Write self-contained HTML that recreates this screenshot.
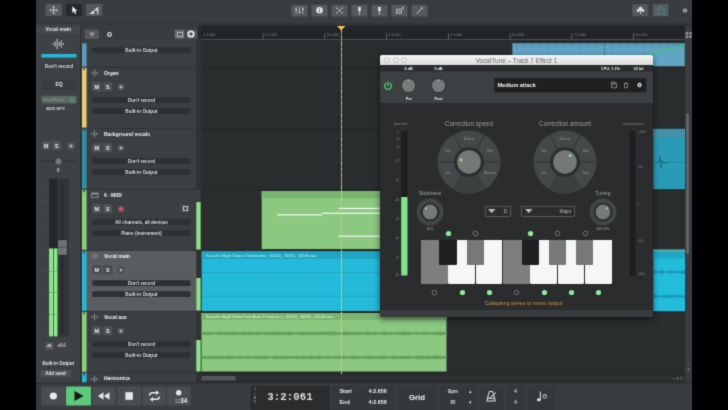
<!DOCTYPE html>
<html><head><meta charset="utf-8"><title>DAW</title>
<style>
html,body{margin:0;padding:0;background:#000;}
body{width:728px;height:410px;overflow:hidden;position:relative;font-family:"Liberation Sans",sans-serif;}
#s{position:absolute;left:0;top:0;width:728px;height:410px;overflow:hidden;background:#000;filter:url(#soft);}
#s div,#s svg{position:absolute;}
#s .t{white-space:nowrap;overflow:visible;}
</style></head><body><svg width="0" height="0" style="position:absolute"><filter id="soft" x="0" y="0" width="100%" height="100%" color-interpolation-filters="sRGB"><feConvolveMatrix order="3" kernelMatrix="0.0192 0.1001 0.0192 0.1001 0.5228 0.1001 0.0192 0.1001 0.0192" edgeMode="duplicate" preserveAlpha="true"/></filter></svg><div id="s">
<svg style="left:198px;top:24px" width="494" height="359"><rect x="0" y="0" width="494" height="359" fill="#2a2d2e"/></svg>
<svg style="left:201px;top:24px" width="484" height="15"><rect x="0" y="0" width="484" height="15" fill="#222527"/></svg>
<svg style="left:201px;top:39px" width="484" height="1"><rect x="0" y="0" width="484" height="1" fill="#4a4d4f"/></svg>
<div class="t" style="left:203.3px;top:32.3px;width:30px;height:6px;line-height:6px;font-size:3.6px;color:#7d8082;font-weight:normal;text-align:left;">1:1:000</div>
<svg style="left:262px;top:33px" width="2" height="7"><rect x="0.7" y="0" width="0.8" height="6.5" fill="#6a6d6f"/></svg>
<div class="t" style="left:265px;top:32.3px;width:30px;height:6px;line-height:6px;font-size:3.6px;color:#7d8082;font-weight:normal;text-align:left;">2:1:000</div>
<svg style="left:324px;top:33px" width="2" height="7"><rect x="0.5" y="0" width="0.8" height="6.5" fill="#6a6d6f"/></svg>
<div class="t" style="left:326.8px;top:32.3px;width:30px;height:6px;line-height:6px;font-size:3.6px;color:#7d8082;font-weight:normal;text-align:left;">3:1:000</div>
<svg style="left:386px;top:33px" width="1" height="7"><rect x="0.2" y="0" width="0.8" height="6.5" fill="#6a6d6f"/></svg>
<div class="t" style="left:388.5px;top:32.3px;width:30px;height:6px;line-height:6px;font-size:3.6px;color:#7d8082;font-weight:normal;text-align:left;">4:1:000</div>
<svg style="left:448px;top:33px" width="1" height="7"><rect x="0" y="0" width="0.8" height="6.5" fill="#6a6d6f"/></svg>
<div class="t" style="left:450.3px;top:32.3px;width:30px;height:6px;line-height:6px;font-size:3.6px;color:#7d8082;font-weight:normal;text-align:left;">5:1:000</div>
<svg style="left:509px;top:33px" width="2" height="7"><rect x="0.7" y="0" width="0.8" height="6.5" fill="#6a6d6f"/></svg>
<div class="t" style="left:512px;top:32.3px;width:30px;height:6px;line-height:6px;font-size:3.6px;color:#7d8082;font-weight:normal;text-align:left;">6:1:000</div>
<svg style="left:571px;top:33px" width="2" height="7"><rect x="0.5" y="0" width="0.8" height="6.5" fill="#6a6d6f"/></svg>
<div class="t" style="left:573.8px;top:32.3px;width:30px;height:6px;line-height:6px;font-size:3.6px;color:#7d8082;font-weight:normal;text-align:left;">7:1:000</div>
<svg style="left:633px;top:33px" width="1" height="7"><rect x="0.2" y="0" width="0.8" height="6.5" fill="#6a6d6f"/></svg>
<div class="t" style="left:635.5px;top:32.3px;width:30px;height:6px;line-height:6px;font-size:3.6px;color:#7d8082;font-weight:normal;text-align:left;">8:1:000</div>
<svg style="left:198px;top:67px" width="487" height="2"><rect x="0" y="0.2" width="487" height="1" fill="#242728"/></svg>
<svg style="left:198px;top:128px" width="487" height="2"><rect x="0" y="0.2" width="487" height="1" fill="#242728"/></svg>
<svg style="left:198px;top:189px" width="487" height="2"><rect x="0" y="0.2" width="487" height="1" fill="#242728"/></svg>
<svg style="left:198px;top:250px" width="487" height="2"><rect x="0" y="0.3" width="487" height="1" fill="#242728"/></svg>
<svg style="left:198px;top:311px" width="487" height="2"><rect x="0" y="0.3" width="487" height="1" fill="#242728"/></svg>
<svg style="left:198px;top:372px" width="487" height="2"><rect x="0" y="0.4" width="487" height="1" fill="#242728"/></svg>
<svg style="left:512px;top:43px" width="173" height="24"><rect x="0.4" y="0.4" width="172.3" height="22.8" fill="#61a5c5"/></svg>
<svg style="left:512px;top:43px" width="173" height="3"><rect x="0.4" y="0.4" width="172.3" height="2.5" fill="#5798b8"/></svg>
<svg style="left:516px;top:46px" width="1" height="4"><rect x="0" y="0" width="0.6" height="4" fill="#3f7f9f"/></svg>
<svg style="left:524px;top:46px" width="1" height="2"><rect x="0" y="0" width="0.6" height="2" fill="#3f7f9f"/></svg>
<svg style="left:532px;top:46px" width="1" height="2"><rect x="0" y="0" width="0.6" height="2" fill="#3f7f9f"/></svg>
<svg style="left:540px;top:46px" width="1" height="2"><rect x="0" y="0" width="0.6" height="2" fill="#3f7f9f"/></svg>
<svg style="left:548px;top:46px" width="1" height="4"><rect x="0" y="0" width="0.6" height="4" fill="#3f7f9f"/></svg>
<svg style="left:556px;top:46px" width="1" height="2"><rect x="0" y="0" width="0.6" height="2" fill="#3f7f9f"/></svg>
<svg style="left:564px;top:46px" width="1" height="2"><rect x="0" y="0" width="0.6" height="2" fill="#3f7f9f"/></svg>
<svg style="left:572px;top:46px" width="1" height="2"><rect x="0" y="0" width="0.6" height="2" fill="#3f7f9f"/></svg>
<svg style="left:580px;top:46px" width="1" height="4"><rect x="0" y="0" width="0.6" height="4" fill="#3f7f9f"/></svg>
<svg style="left:588px;top:46px" width="1" height="2"><rect x="0" y="0" width="0.6" height="2" fill="#3f7f9f"/></svg>
<svg style="left:596px;top:46px" width="1" height="2"><rect x="0" y="0" width="0.6" height="2" fill="#3f7f9f"/></svg>
<svg style="left:604px;top:46px" width="1" height="2"><rect x="0" y="0" width="0.6" height="2" fill="#3f7f9f"/></svg>
<svg style="left:612px;top:46px" width="1" height="4"><rect x="0" y="0" width="0.6" height="4" fill="#3f7f9f"/></svg>
<svg style="left:620px;top:46px" width="1" height="2"><rect x="0" y="0" width="0.6" height="2" fill="#3f7f9f"/></svg>
<svg style="left:628px;top:46px" width="1" height="2"><rect x="0" y="0" width="0.6" height="2" fill="#3f7f9f"/></svg>
<svg style="left:636px;top:46px" width="1" height="2"><rect x="0" y="0" width="0.6" height="2" fill="#3f7f9f"/></svg>
<svg style="left:644px;top:46px" width="1" height="4"><rect x="0" y="0" width="0.6" height="4" fill="#3f7f9f"/></svg>
<svg style="left:652px;top:46px" width="1" height="2"><rect x="0" y="0" width="0.6" height="2" fill="#3f7f9f"/></svg>
<svg style="left:660px;top:46px" width="1" height="2"><rect x="0" y="0" width="0.6" height="2" fill="#3f7f9f"/></svg>
<svg style="left:668px;top:46px" width="1" height="2"><rect x="0" y="0" width="0.6" height="2" fill="#3f7f9f"/></svg>
<svg style="left:676px;top:46px" width="1" height="4"><rect x="0" y="0" width="0.6" height="4" fill="#3f7f9f"/></svg>
<svg style="left:684px;top:46px" width="1" height="2"><rect x="0" y="0" width="0.6" height="2" fill="#3f7f9f"/></svg>
<svg style="left:604px;top:43px" width="1" height="24"><rect x="0" y="0.4" width="0.9" height="23" fill="#3f7893"/></svg>
<svg style="left:640px;top:43px" width="46" height="12" viewBox="0 0 46 12"><path d="M8 13 L30 5.5 L44.6 2.4" stroke="#3fc46a" stroke-width="1.3" fill="none"/></svg>
<svg style="left:653px;top:128px" width="33" height="62"><rect x="0.3" y="0.8" width="31.9" height="60.4" fill="#2a9bb6"/></svg>
<div style="left:653.3px;top:128.8px;width:31.9px;height:7.8px;background:#3f8fa6;background-image:repeating-linear-gradient(90deg,#3a879d 0 1px,#4b9db2 1px 2px)"></div>
<svg style="left:653px;top:162px" width="33" height="1"><rect x="0.3" y="0.2" width="31.9" height="0.7" fill="#1f7f97"/></svg>
<svg style="left:656px;top:152px" width="12" height="20" viewBox="0 0 12 20"><path d="M0 10.5 L3 10.3 L4 4 L5 16 L6 8.5 L7 11 L12 10.6" stroke="#1b6f86" stroke-width="1" fill="none"/></svg>
<svg style="left:261px;top:191px" width="131" height="58"><rect x="0.7" y="0" width="130" height="58" fill="#8bc880"/></svg>
<svg style="left:261px;top:191px" width="131" height="8"><rect x="0.7" y="0" width="130" height="7.5" fill="#7ab570"/></svg>
<svg style="left:338px;top:207px" width="46" height="3"><rect x="0.5" y="0.8" width="45" height="1.3" fill="#eef6ec"/></svg>
<svg style="left:277px;top:214px" width="45" height="2"><rect x="0" y="0.2" width="45" height="1.3" fill="#eef6ec"/></svg>
<svg style="left:322px;top:212px" width="60" height="2"><rect x="0" y="0.6" width="60" height="1.3" fill="#eef6ec"/></svg>
<svg style="left:338px;top:235px" width="46" height="2"><rect x="0.5" y="0.6" width="45" height="1.3" fill="#eef6ec"/></svg>
<svg style="left:201px;top:251px" width="186" height="60"><rect x="0.7" y="0.4" width="185" height="59.6" fill="#24bad9"/></svg>
<svg style="left:201px;top:251px" width="186" height="8"><rect x="0.7" y="0.4" width="185" height="7.6" fill="#1fa6c4"/></svg>
<svg style="left:201px;top:272px" width="186" height="1"><rect x="0.7" y="0" width="185" height="0.7" fill="#1c9cb8"/></svg>
<svg style="left:201px;top:295px" width="186" height="2"><rect x="0.7" y="0.8" width="185" height="0.7" fill="#1c9cb8"/></svg>
<div class="t" style="left:206px;top:252.5px;width:150px;height:6px;line-height:6px;font-size:3.95px;color:#c8eef7;font-weight:normal;text-align:left;">Karaoke Night Chorus Tambourine_ 44100_ 16000_ 44100.wav</div>
<svg style="left:653px;top:249px" width="33" height="63"><rect x="0.3" y="0.6" width="31.9" height="61.6" fill="#22bcdc"/></svg>
<svg style="left:653px;top:249px" width="33" height="3"><rect x="0.3" y="0.6" width="31.9" height="2.2" fill="#5aa79a"/></svg>
<svg style="left:653px;top:251px" width="33" height="8"><rect x="0.3" y="0.8" width="31.9" height="6.7" fill="#1fa8c6"/></svg>
<svg style="left:653.3px;top:249px" width="31.9" height="62" viewBox="0 249 31.9 62"><path d="M0 270.86 L1 271.02 L2 270.46 L3 270.75 L4 271.39 L5 271.11 L6 271.47 L7 271.18 L8 269.92 L9 269.87 L10 270.15 L11 271.56 L12 271.03 L13 271.68 L14 271.53 L15 271.44 L16 270.21 L17 270.72 L18 270.87 L19 271.14 L20 271.22 L21 271.08 L22 270.24 L23 271.44 L24 271.58 L25 271.32 L26 270.86 L27 271.53 L28 271.18 L29 270.62 L30 270.01 L31 270.4 L32 271.54 L32 272.73 L31 273.64 L30 273.95 L29 273.46 L28 273.01 L27 272.74 L26 273.27 L25 272.91 L24 272.7 L23 272.81 L22 273.77 L21 273.1 L20 272.98 L19 273.04 L18 273.26 L17 273.38 L16 273.8 L15 272.81 L14 272.73 L13 272.61 L12 273.13 L11 272.72 L10 273.84 L9 274.06 L8 274.02 L7 273.02 L6 272.79 L5 273.07 L4 272.85 L3 273.36 L2 273.59 L1 273.15 L0 273.27Z M0 295.94 L1 294.24 L2 295.29 L3 294.71 L4 295.46 L5 295.17 L6 295.63 L7 295.86 L8 295.77 L9 295.92 L10 294.59 L11 295.86 L12 295.29 L13 295.17 L14 296 L15 294.65 L16 294.16 L17 295.29 L18 295.34 L19 295.47 L20 295.42 L21 295.84 L22 294.15 L23 295.17 L24 295.21 L25 295.34 L26 295.54 L27 295.29 L28 295.84 L29 295.48 L30 295.46 L31 294.93 L32 295.28 L32 297.48 L31 297.76 L30 297.33 L29 297.31 L28 297.03 L27 297.47 L26 297.26 L25 297.43 L24 297.54 L23 297.57 L22 298.38 L21 297.02 L20 297.36 L19 297.33 L18 297.42 L17 297.46 L16 298.37 L15 297.98 L14 296.9 L13 297.56 L12 297.46 L11 297.02 L10 298.02 L9 296.96 L8 297.08 L7 297.01 L6 297.19 L5 297.56 L4 297.33 L3 297.93 L2 297.46 L1 298.31 L0 296.95Z" fill="#1a93ad"/></svg>
<svg style="left:201px;top:313px" width="246" height="59"><rect x="0.5" y="0" width="245" height="58.5" fill="#8bc880"/></svg>
<svg style="left:201px;top:313px" width="246" height="7"><rect x="0.5" y="0" width="245" height="7" fill="#7ab570"/></svg>
<div class="t" style="left:206px;top:313.5px;width:180px;height:6px;line-height:6px;font-size:3.95px;color:#e4f3e0;font-weight:normal;text-align:left;">Karaoke Night Verse Fuzz Bass F maj var 1_ 44100_ 16000_ 44100.wav</div>
<svg style="left:0;top:0" width="728" height="410" viewBox="0 0 728 410"><path d="M201.5 332.1 L204 331.8 L206.5 332 L209 331.8 L211.5 331.8 L214 332.3 L216.5 332.3 L219 331.6 L221.5 332.1 L224 332.1 L226.5 331.4 L229 331.9 L231.5 331.6 L234 331.9 L236.5 331.7 L239 332.2 L241.5 331.7 L244 331.5 L246.5 331.9 L249 331.6 L251.5 331.7 L254 332.3 L256.5 331.6 L259 331.8 L261.5 332.1 L264 332.3 L266.5 331.5 L269 331.9 L271.5 331.7 L274 331.5 L276.5 331.7 L279 331.5 L281.5 332 L284 331.6 L286.5 331.9 L289 331.5 L291.5 331.5 L294 332.3 L296.5 332.2 L299 332.1 L301.5 331.4 L304 331.9 L306.5 331.8 L309 332.1 L311.5 331.9 L314 332 L316.5 332 L319 331.8 L321.5 331.8 L324 331.5 L326.5 331.7 L329 331.5 L331.5 331.5 L334 331.4 L336.5 331.7 L339 332.2 L341.5 331.5 L344 331.4 L346.5 331.5 L349 331.8 L351.5 331.7 L354 332.1 L356.5 331.6 L359 331.8 L361.5 332.1 L364 332.3 L366.5 331.5 L369 331.4 L371.5 332.3 L374 331.6 L376.5 332 L379 332.2 L381.5 332.1 L384 331.6 L386.5 331.5 L389 332.3 L391.5 331.8 L394 332.3 L396.5 331.7 L399 332 L401.5 331.5 L404 331.4 L406.5 331.9 L409 331.4 L411.5 332.1 L414 332.3 L416.5 331.8 L419 332.3 L421.5 332.2 L424 332 L426.5 331.8 L429 332.2 L431.5 332.3 L434 331.5 L436.5 332 L439 331.4 L441.5 331.5 L444 332 L446.5 331.9 L446.5 334.9 L444 334.9 L441.5 335.3 L439 335.4 L436.5 334.8 L434 335.3 L431.5 334.6 L429 334.7 L426.5 335.1 L424 334.9 L421.5 334.7 L419 334.6 L416.5 335 L414 334.6 L411.5 334.8 L409 335.4 L406.5 335 L404 335.4 L401.5 335.3 L399 334.8 L396.5 335.2 L394 334.6 L391.5 335.1 L389 334.6 L386.5 335.3 L384 335.2 L381.5 334.8 L379 334.7 L376.5 334.9 L374 335.2 L371.5 334.6 L369 335.4 L366.5 335.3 L364 334.6 L361.5 334.8 L359 335 L356.5 335.2 L354 334.7 L351.5 335.1 L349 335 L346.5 335.3 L344 335.4 L341.5 335.3 L339 334.7 L336.5 335.1 L334 335.4 L331.5 335.3 L329 335.3 L326.5 335.1 L324 335.3 L321.5 335 L319 335 L316.5 334.8 L314 334.9 L311.5 335 L309 334.8 L306.5 335.1 L304 334.9 L301.5 335.4 L299 334.7 L296.5 334.7 L294 334.6 L291.5 335.3 L289 335.3 L286.5 334.9 L284 335.2 L281.5 334.9 L279 335.3 L276.5 335.1 L274 335.3 L271.5 335.2 L269 334.9 L266.5 335.3 L264 334.6 L261.5 334.8 L259 335 L256.5 335.2 L254 334.6 L251.5 335.1 L249 335.2 L246.5 335 L244 335.3 L241.5 335.1 L239 334.7 L236.5 335.1 L234 334.9 L231.5 335.3 L229 334.9 L226.5 335.4 L224 334.7 L221.5 334.8 L219 335.3 L216.5 334.6 L214 334.6 L211.5 335.1 L209 335.1 L206.5 334.9 L204 335 L201.5 334.7Z" fill="#66a25e"/><path d="M201.5 355.9 L204 355.7 L206.5 355.8 L209 355.8 L211.5 355.8 L214 355.5 L216.5 355.9 L219 355.9 L221.5 355.7 L224 356.1 L226.5 356.1 L229 355.4 L231.5 355.9 L234 355.8 L236.5 356.3 L239 356 L241.5 355.8 L244 356.3 L246.5 355.8 L249 355.7 L251.5 356.3 L254 355.8 L256.5 355.9 L259 355.7 L261.5 356 L264 355.7 L266.5 355.6 L269 356.3 L271.5 356.3 L274 355.7 L276.5 355.4 L279 356.1 L281.5 355.9 L284 355.8 L286.5 356 L289 356 L291.5 356 L294 356 L296.5 355.8 L299 356.1 L301.5 356 L304 355.6 L306.5 356.3 L309 355.8 L311.5 355.7 L314 356.1 L316.5 356.1 L319 355.6 L321.5 356.1 L324 356.2 L326.5 355.9 L329 355.7 L331.5 356.2 L334 356 L336.5 356 L339 355.6 L341.5 355.9 L344 355.5 L346.5 356.2 L349 356 L351.5 355.7 L354 355.5 L356.5 355.9 L359 356.1 L361.5 356.2 L364 355.8 L366.5 356.2 L369 355.6 L371.5 355.6 L374 356.2 L376.5 356.1 L379 355.6 L381.5 355.7 L384 355.6 L386.5 356 L389 356.2 L391.5 356.1 L394 355.6 L396.5 356.1 L399 356 L401.5 356 L404 355.9 L406.5 356 L409 355.5 L411.5 356.2 L414 356.3 L416.5 355.5 L419 355.5 L421.5 355.4 L424 355.9 L426.5 355.4 L429 355.5 L431.5 356.1 L434 355.6 L436.5 355.6 L439 355.7 L441.5 355.9 L444 356.1 L446.5 356 L446.5 358.8 L444 358.8 L441.5 359 L439 359.1 L436.5 359.3 L434 359.2 L431.5 358.7 L429 359.3 L426.5 359.3 L424 358.9 L421.5 359.4 L419 359.3 L416.5 359.3 L414 358.5 L411.5 358.7 L409 359.3 L406.5 358.9 L404 358.9 L401.5 358.9 L399 358.8 L396.5 358.8 L394 359.2 L391.5 358.8 L389 358.6 L386.5 358.8 L384 359.2 L381.5 359.1 L379 359.2 L376.5 358.8 L374 358.7 L371.5 359.3 L369 359.2 L366.5 358.7 L364 359 L361.5 358.6 L359 358.7 L356.5 358.9 L354 359.3 L351.5 359.1 L349 358.8 L346.5 358.7 L344 359.3 L341.5 358.9 L339 359.2 L336.5 358.8 L334 358.8 L331.5 358.6 L329 359.1 L326.5 358.9 L324 358.7 L321.5 358.7 L319 359.2 L316.5 358.7 L314 358.8 L311.5 359.2 L309 359 L306.5 358.6 L304 359.2 L301.5 358.9 L299 358.8 L296.5 359 L294 358.9 L291.5 358.8 L289 358.8 L286.5 358.8 L284 359 L281.5 358.9 L279 358.8 L276.5 359.4 L274 359.1 L271.5 358.6 L269 358.6 L266.5 359.2 L264 359.1 L261.5 358.8 L259 359.1 L256.5 358.9 L254 359.1 L251.5 358.6 L249 359.1 L246.5 359.1 L244 358.6 L241.5 359 L239 358.9 L236.5 358.5 L234 359 L231.5 359 L229 359.4 L226.5 358.8 L224 358.7 L221.5 359.2 L219 358.9 L216.5 359 L214 359.3 L211.5 359.1 L209 359 L206.5 359 L204 359.1 L201.5 359Z" fill="#66a25e"/></svg>
<svg style="left:201px;top:376px" width="484" height="5"><rect x="0.5" y="0" width="483" height="4.5" fill="#2c2f30"/></svg>
<svg style="left:201px;top:376px" width="35" height="5"><rect x="0.5" y="0" width="34" height="4.5" rx="1" fill="#55585a"/></svg>
<svg style="left:685px;top:24px" width="7" height="359"><rect x="0" y="0" width="7" height="359" fill="#3a3d3f"/></svg>
<svg style="left:686px;top:113px" width="3" height="141"><rect x="0.2" y="0" width="2.6" height="141" rx="1.3" fill="#66696b"/></svg>
<svg style="left:685px;top:24px" width="7" height="15"><rect x="0" y="0" width="7" height="15" fill="#3a3d3f"/></svg>
<svg style="left:685px;top:32px" width="7" height="6"><rect x="0.6" y="0" width="6" height="6" fill="#8d9092"/></svg>
<svg style="left:688px;top:32px" width="2" height="6"><rect x="0.2" y="0" width="0.9" height="6" fill="#3a3d3f"/></svg>
<svg style="left:685px;top:34px" width="7" height="2"><rect x="0.6" y="0.6" width="6" height="0.9" fill="#3a3d3f"/></svg>
<div class="t" style="left:670px;top:374px;width:16px;height:8px;line-height:8px;font-size:5px;color:#8a8d8f;font-weight:bold;text-align:center;">- + &#8759;</div>
<div class="t" style="left:685px;top:360px;width:7px;height:6px;line-height:6px;font-size:5px;color:#8a8d8f;font-weight:bold;text-align:center;">-</div>
<div class="t" style="left:685px;top:366px;width:7px;height:6px;line-height:6px;font-size:5px;color:#8a8d8f;font-weight:bold;text-align:center;">+</div>
<div style="left:341px;top:29px;width:1px;height:344.5px;background:repeating-linear-gradient(#d8c674 0 1.6px,rgba(216,198,116,0.45) 1.6px 2.4px);width:0.9px"></div>
<svg style="left:337.4px;top:25.6px" width="8.4" height="4.4" viewBox="0 0 8.4 4.4"><path d="M0 0 H8.4 L4.2 4.4Z" fill="#f0c85a"/></svg>
<svg style="left:36px;top:0px" width="656" height="24"><rect x="0" y="0" width="656" height="24" fill="#3a3d3f"/></svg>
<svg style="left:45px;top:4px" width="17" height="12"><rect x="0.5" y="0" width="16.3" height="12" rx="1" fill="#56595b"/></svg>
<svg style="left:66px;top:4px" width="16" height="12"><rect x="0" y="0" width="16" height="12" rx="1" fill="#27292b"/></svg>
<svg style="left:86px;top:4px" width="17" height="12"><rect x="0" y="0" width="16.3" height="12" rx="1" fill="#56595b"/></svg>
<svg style="left:291px;top:4px" width="17" height="13"><rect x="0.5" y="0.8" width="16" height="11.8" rx="1" fill="#56595b"/></svg>
<svg style="left:311px;top:4px" width="17" height="13"><rect x="0.5" y="0.8" width="16" height="11.8" rx="1" fill="#56595b"/></svg>
<svg style="left:331px;top:4px" width="17" height="13"><rect x="0.5" y="0.8" width="16" height="11.8" rx="1" fill="#56595b"/></svg>
<svg style="left:351px;top:4px" width="17" height="13"><rect x="0.5" y="0.8" width="16" height="11.8" rx="1" fill="#56595b"/></svg>
<svg style="left:371px;top:4px" width="17" height="13"><rect x="0.5" y="0.8" width="16" height="11.8" rx="1" fill="#56595b"/></svg>
<svg style="left:391px;top:4px" width="17" height="13"><rect x="0.5" y="0.8" width="16" height="11.8" rx="1" fill="#56595b"/></svg>
<svg style="left:411px;top:4px" width="17" height="13"><rect x="0.5" y="0.8" width="16" height="11.8" rx="1" fill="#56595b"/></svg>
<svg style="left:632px;top:4px" width="17" height="13"><rect x="0.3" y="0.3" width="16" height="12" rx="1" fill="#56595b"/></svg>
<svg style="left:653px;top:4px" width="16" height="13"><rect x="0" y="0.3" width="15.5" height="12" rx="1" fill="#535e61"/></svg>
<svg style="left:0;top:0" width="728" height="24" viewBox="0 0 728 24">
<g stroke="#dcdedf" stroke-width="0.8" fill="none">
<path d="M53.7 6.4 V14 M49.9 10.2 H57.5 M52.6 7.5 L53.7 6.4 L54.8 7.5 M52.6 12.9 L53.7 14 L54.8 12.9 M51 9.1 L49.9 10.2 L51 11.3 M56.4 9.1 L57.5 10.2 L56.4 11.3"/>
</g>
<path d="M72.3 6.2 L72.3 13 L74 11.5 L75.2 14.3 L76.3 13.8 L75.1 11.1 L77.3 11Z" fill="#f2f3f4"/>
<path d="M89.3 14 L98.3 6.8 L98.3 14Z" fill="#dcdedf"/>
<path d="M94.3 10.6 h2.8 v3.4 h-2.8z" fill="#56595b"/>
<g stroke="#d2d4d5" stroke-width="0.7" fill="none">
<path d="M296.2 7 V14 M299.5 7 V14 M302.8 7 V14"/>
</g>
<g fill="#d2d4d5"><rect x="295.4" y="9" width="1.6" height="1.4"/><rect x="298.7" y="11.2" width="1.6" height="1.4"/><rect x="302" y="8.4" width="1.6" height="1.4"/></g>
<circle cx="319.5" cy="10.3" r="3.3" fill="#e2e4e5"/>
<rect x="319.05" y="9.8" width="0.9" height="2.5" fill="#56595b"/><rect x="319.05" y="8.2" width="0.9" height="0.9" fill="#56595b"/>
<g fill="#d2d4d5"><circle cx="337" cy="8.2" r="0.8"/><circle cx="342" cy="8.2" r="0.8"/><circle cx="337" cy="12.8" r="0.8"/><circle cx="342" cy="12.8" r="0.8"/><circle cx="339.5" cy="10.5" r="1.1"/></g>
<g fill="#d8dadb"><rect x="358" y="7" width="2.8" height="4.2"/><rect x="359" y="11.2" width="0.7" height="2"/><circle cx="359.4" cy="14" r="0.7"/>
<rect x="378" y="7" width="2.8" height="4.2"/><rect x="379" y="11.2" width="0.7" height="2"/><rect x="378.3" y="13.5" width="2.2" height="0.7"/></g>
<g stroke="#d2d4d5" stroke-width="0.8" fill="none"><path d="M396.5 9.2 h5 v4 h-5z M397.7 11 h2.6 M403 7 v2 M402 8 h2"/></g>
<path d="M416.5 14 L422.5 7.5 M421 7.3 L422.7 9" stroke="#d2d4d5" stroke-width="0.9" fill="none"/>
<g fill="#dcdedf"><circle cx="640.5" cy="8.8" r="2"/><circle cx="638.2" cy="10.6" r="1.5"/><circle cx="642.8" cy="10.6" r="1.5"/><rect x="640.1" y="9" width="0.8" height="5"/></g>
<g stroke="#64898f" stroke-width="0.8" fill="none"><path d="M658.8 8.2 h-1 v6 h6.4 v-6 h-1 M661 6 v5.5 M659.9 7.1 L661 6 L662.1 7.1"/></g>
<circle cx="685" cy="10.5" r="1.5" fill="none" stroke="#c9cbcc" stroke-width="1.2"/>
</svg>
<div style="left:36px;top:22px;width:656px;height:4.3px;background:linear-gradient(#383b3d,#2c2e30);"></div>
<svg style="left:36px;top:24px" width="45" height="359"><rect x="0" y="0" width="44.5" height="359" fill="#3f4244"/></svg>
<svg style="left:36px;top:26px" width="45" height="8"><rect x="0" y="0.5" width="44.5" height="7" fill="#45484a"/></svg>
<div class="t" style="left:36px;top:26px;width:44.5px;height:8px;line-height:8px;font-size:4.9px;color:#e4e6e7;font-weight:bold;text-align:center;">Vocal main</div>
<svg style="left:51px;top:37.5px" width="14" height="12" viewBox="0 0 14 12"><g stroke="#cfd1d2" stroke-width="1"><path d="M1.8 5.3 V6.7 M4 3.5 V8.5 M6.1 0.8 V11.2 M8.2 4 V8 M10.2 2.3 V9.7 M12.3 5 V7"/></g></svg>
<svg style="left:41px;top:54px" width="36" height="4"><rect x="0.5" y="0" width="35" height="3.6" fill="#24b6d6"/></svg>
<svg style="left:41px;top:62px" width="36" height="8"><rect x="0.5" y="0.7" width="35" height="6.8" fill="#3b3e40"/></svg>
<div class="t" style="left:41.5px;top:63.5px;width:35px;height:6.6px;line-height:6.6px;font-size:4.8px;color:#dcdedf;font-weight:bold;text-align:center;">Don't record</div>
<svg style="left:41px;top:79px" width="36" height="11"><rect x="0.5" y="0.5" width="35" height="10.3" fill="#3a3d3f"/></svg>
<div class="t" style="left:41.5px;top:80.3px;width:35px;height:9.7px;line-height:9.7px;font-size:5px;color:#e4e6e7;font-weight:bold;text-align:center;">EQ</div>
<svg style="left:41px;top:95px" width="36" height="9"><rect x="0.5" y="0.8" width="35" height="7.8" rx="1" fill="#5a685f"/></svg>
<div class="t" style="left:43px;top:96px;width:24px;height:7.8px;line-height:7.8px;font-size:4.3px;color:#80968a;font-weight:bold;text-align:left;">VocalTune</div>
<svg style="left:69.3px;top:96.8px" width="6" height="6" viewBox="0 0 6 6"><path d="M3 0.6 V2.8 M1.7 1.5 A2 2 0 1 0 4.3 1.5" stroke="#52c777" stroke-width="0.8" fill="none"/></svg>
<div class="t" style="left:33.2px;top:105px;width:44.5px;height:7px;line-height:7px;font-size:4.3px;color:#d4d6d7;font-weight:bold;text-align:center;">ADD EFX</div>
<svg style="left:42px;top:141px" width="9" height="9"><rect x="0" y="0.6" width="8.4" height="8" rx="1" fill="#55585a"/></svg>
<svg style="left:52px;top:141px" width="9" height="9"><rect x="0.3" y="0.6" width="8.7" height="8" rx="1" fill="#55585a"/></svg>
<div class="t" style="left:42px;top:142.3px;width:8.4px;height:8px;line-height:8px;font-size:5.2px;color:#eceeef;font-weight:bold;text-align:center;">M</div>
<div class="t" style="left:52.3px;top:142.3px;width:8.7px;height:8px;line-height:8px;font-size:5.2px;color:#eceeef;font-weight:bold;text-align:center;">S</div>
<svg style="left:66.8px;top:141.8px" width="8" height="8" viewBox="0 0 8 8"><circle cx="4" cy="4" r="3.7" fill="#55585a"/><circle cx="4" cy="4" r="1.5" fill="#aeb0b1"/></svg>
<svg style="left:40px;top:160px" width="37" height="2"><rect x="0.5" y="0.7" width="36.5" height="0.8" fill="#2a2c2e"/></svg>
<svg style="left:55px;top:157.5px" width="7" height="7" viewBox="0 0 7 7"><circle cx="3.5" cy="3.5" r="3" fill="#76797b"/></svg>
<div class="t" style="left:36px;top:167px;width:44.5px;height:7px;line-height:7px;font-size:4.5px;color:#d4d6d7;font-weight:bold;text-align:center;">0</div>
<svg style="left:49px;top:178px" width="20" height="159"><rect x="0.1" y="0.6" width="19.5" height="157.8" fill="#323537"/></svg>
<svg style="left:49px;top:178px" width="9" height="159"><rect x="0.1" y="0.6" width="8" height="157.8" fill="#252729"/></svg>
<svg style="left:49px;top:248px" width="5" height="89"><rect x="0.1" y="0.4" width="4.1" height="88" fill="#8ce88c"/></svg>
<svg style="left:53px;top:248px" width="5" height="89"><rect x="0.8" y="0.4" width="3.7" height="88" fill="#8ce88c"/></svg>
<svg style="left:49px;top:271px" width="9" height="1"><rect x="0.3" y="0" width="8" height="0.7" fill="#5aa85a"/></svg>
<svg style="left:49px;top:292px" width="9" height="1"><rect x="0.3" y="0" width="8" height="0.7" fill="#5aa85a"/></svg>
<svg style="left:49px;top:314px" width="9" height="1"><rect x="0.3" y="0" width="8" height="0.7" fill="#5aa85a"/></svg>
<svg style="left:61px;top:185px" width="2" height="148"><rect x="0.7" y="0" width="1.1" height="148" fill="#1d1f20"/></svg>
<div style="left:57.8px;top:239.5px;width:9px;height:15.5px;background:#6f7274;border-radius:1px;box-shadow:0 0 1px #000"></div>
<svg style="left:57px;top:246px" width="10" height="2"><rect x="0.8" y="0.8" width="9" height="0.8" fill="#45484a"/></svg>
<svg style="left:43px;top:187px" width="3" height="1"><rect x="0.5" y="0" width="2.5" height="0.8" fill="#5a5d5f"/></svg>
<svg style="left:43px;top:200px" width="3" height="1"><rect x="0.5" y="0" width="2.5" height="0.8" fill="#5a5d5f"/></svg>
<svg style="left:43px;top:213px" width="3" height="1"><rect x="0.5" y="0" width="2.5" height="0.8" fill="#5a5d5f"/></svg>
<svg style="left:43px;top:229px" width="3" height="1"><rect x="0.5" y="0" width="2.5" height="0.8" fill="#5a5d5f"/></svg>
<svg style="left:43px;top:250px" width="3" height="1"><rect x="0.5" y="0" width="2.5" height="0.8" fill="#5a5d5f"/></svg>
<svg style="left:43px;top:271px" width="3" height="1"><rect x="0.5" y="0" width="2.5" height="0.8" fill="#5a5d5f"/></svg>
<svg style="left:43px;top:292px" width="3" height="1"><rect x="0.5" y="0" width="2.5" height="0.8" fill="#5a5d5f"/></svg>
<svg style="left:43px;top:314px" width="3" height="1"><rect x="0.5" y="0" width="2.5" height="0.8" fill="#5a5d5f"/></svg>
<svg style="left:43px;top:334px" width="3" height="1"><rect x="0.5" y="0" width="2.5" height="0.8" fill="#5a5d5f"/></svg>
<svg style="left:45px;top:342px" width="9" height="8"><rect x="0.4" y="0.4" width="7.8" height="7.4" rx="1" fill="#55585a"/></svg>
<div class="t" style="left:45.4px;top:342.8px;width:7.8px;height:7.4px;line-height:7.4px;font-size:3.4px;color:#d4d6d7;font-weight:bold;text-align:center;">dB</div>
<div class="t" style="left:56.9px;top:342.8px;width:14px;height:6.5px;line-height:6.5px;font-size:4.5px;color:#d4d6d7;font-weight:bold;text-align:left;">+0.0</div>
<div class="t" style="left:36px;top:359.5px;width:44.5px;height:7px;line-height:7px;font-size:4.5px;color:#e4e6e7;font-weight:bold;text-align:center;">Built-in Output</div>
<svg style="left:40px;top:370px" width="31" height="7"><rect x="0.4" y="0.2" width="30.4" height="6.8" rx="1" fill="#4f5254"/></svg>
<div class="t" style="left:40.4px;top:370.6px;width:30.4px;height:6.8px;line-height:6.8px;font-size:4.5px;color:#e4e6e7;font-weight:bold;text-align:center;">Add send</div>
<svg style="left:80px;top:24px" width="118" height="359"><rect x="0.5" y="0" width="117.5" height="359" fill="#3c3f41"/></svg>
<svg style="left:80px;top:24px" width="2" height="359"><rect x="0.5" y="0" width="0.8" height="359" fill="#2c2e30"/></svg>
<svg style="left:82px;top:24px" width="116" height="16"><rect x="0" y="0" width="116" height="16" fill="#393c3e"/></svg>
<svg style="left:84px;top:29px" width="15" height="10"><rect x="0.6" y="0.5" width="14.4" height="9.5" rx="1" fill="#55585a"/></svg>
<svg style="left:88.8px;top:31.5px" width="6" height="6" viewBox="0 0 6 6"><path d="M0.5 1 H5.5 M1.3 2.5 H4.7 M2.2 4 H3.8" stroke="#c4c6c7" stroke-width="0.8"/></svg>
<svg style="left:106.1px;top:30.8px" width="7" height="7" viewBox="0 0 7 7"><circle cx="3.5" cy="3.5" r="1.8" fill="none" stroke="#d8dadb" stroke-width="1.3"/></svg>
<svg style="left:174px;top:29px" width="11" height="10"><rect x="0.6" y="0.8" width="10" height="9.2" rx="1" fill="#66696b"/></svg>
<div style="left:176.6px;top:32px;width:6px;height:4.5px;background:#5a5d5f;border:0.7px solid #b4b6b7;border-top-width:1.5px;box-sizing:border-box"></div>
<svg style="left:186px;top:29px" width="11" height="10"><rect x="0" y="0.8" width="11" height="9.2" rx="1" fill="#55585a"/></svg>
<svg style="left:187.4px;top:30.3px" width="8" height="8" viewBox="0 0 8 8"><circle cx="4" cy="4" r="3.6" fill="#eceeef"/><path d="M4 1.9 V6.1 M1.9 4 H6.1" stroke="#2a2c2e" stroke-width="1.1"/></svg>
<svg style="left:82px;top:43px" width="5" height="24"><rect x="0" y="0.3" width="4.6" height="23.43" fill="#5a9cc0"/></svg>
<svg style="left:92px;top:47px" width="99" height="6"><rect x="0.3" y="0.2" width="98.3" height="5.8" rx="1" fill="#2e3032"/></svg>
<div class="t" style="left:92.3px;top:47.900000000000006px;width:98.3px;height:5.8px;line-height:5.8px;font-size:4.6px;color:#dcdedf;font-weight:bold;text-align:center;">Built-in Output</div>
<svg style="left:82px;top:67px" width="5" height="61"><rect x="0" y="0.5" width="4.6" height="60.23" fill="#e6cc78"/></svg>
<svg style="left:82px;top:66px" width="114" height="2"><rect x="0" y="0.8" width="114" height="0.9" fill="#313335"/></svg>
<svg style="left:83px;top:68px" width="2" height="2"><rect x="0.3" y="0.4" width="1.6" height="1.6" fill="#2a2c2e"/></svg>
<svg style="left:90px;top:69.3px" width="10" height="8" viewBox="0 0 10 8"><g stroke="#8f9294" stroke-width="0.9"><path d="M1.2 3.5 V4.5 M2.9 2.6 V5.4 M4.6 0.6 V7.4 M6.3 2.6 V5.4 M8 3.5 V4.5"/></g></svg>
<div class="t" style="left:103.9px;top:68.8px;width:90px;height:8px;line-height:8px;font-size:5px;color:#f2f3f4;font-weight:bold;text-align:left;">Organ</div>
<svg style="left:92px;top:82px" width="10" height="10"><rect x="0.3" y="0.2" width="9" height="9" rx="1" fill="#505355"/></svg>
<svg style="left:103px;top:82px" width="10" height="10"><rect x="0.2" y="0.2" width="9" height="9" rx="1" fill="#505355"/></svg>
<div class="t" style="left:92.3px;top:83px;width:9px;height:8.7px;line-height:8.7px;font-size:5.4px;color:#eceeef;font-weight:bold;text-align:center;">M</div>
<div class="t" style="left:103.2px;top:83px;width:9px;height:8.7px;line-height:8.7px;font-size:5.4px;color:#eceeef;font-weight:bold;text-align:center;">S</div>
<svg style="left:116.8px;top:83px" width="8" height="8" viewBox="0 0 8 8"><circle cx="4" cy="4" r="3.6" fill="#505355"/><circle cx="4" cy="4" r="1.5" fill="#aeb0b1"/></svg>
<svg style="left:92px;top:97px" width="99" height="6"><rect x="0.3" y="0.2" width="98.3" height="5.8" rx="1" fill="#2e3032"/></svg>
<div class="t" style="left:92.3px;top:97.9px;width:98.3px;height:5.8px;line-height:5.8px;font-size:4.6px;color:#dcdedf;font-weight:bold;text-align:center;">Don't record</div>
<svg style="left:92px;top:108px" width="99" height="6"><rect x="0.3" y="0.2" width="98.3" height="5.8" rx="1" fill="#2e3032"/></svg>
<div class="t" style="left:92.3px;top:108.9px;width:98.3px;height:5.8px;line-height:5.8px;font-size:4.6px;color:#dcdedf;font-weight:bold;text-align:center;">Built-in Output</div>
<svg style="left:82px;top:128px" width="5" height="61"><rect x="0" y="0.53" width="4.6" height="60.23" fill="#2f8ea8"/></svg>
<svg style="left:82px;top:127px" width="114" height="2"><rect x="0" y="0.83" width="114" height="0.9" fill="#313335"/></svg>
<svg style="left:83px;top:129px" width="2" height="3"><rect x="0.3" y="0.43" width="1.6" height="1.6" fill="#2a2c2e"/></svg>
<svg style="left:90px;top:130.3px" width="10" height="8" viewBox="0 0 10 8"><g stroke="#8f9294" stroke-width="0.9"><path d="M1.2 3.5 V4.5 M2.9 2.6 V5.4 M4.6 0.6 V7.4 M6.3 2.6 V5.4 M8 3.5 V4.5"/></g></svg>
<div class="t" style="left:103.9px;top:129.82999999999998px;width:90px;height:8px;line-height:8px;font-size:5px;color:#f2f3f4;font-weight:bold;text-align:left;">Background vocals</div>
<svg style="left:92px;top:143px" width="10" height="10"><rect x="0.3" y="0.23" width="9" height="9" rx="1" fill="#505355"/></svg>
<svg style="left:103px;top:143px" width="10" height="10"><rect x="0.2" y="0.23" width="9" height="9" rx="1" fill="#505355"/></svg>
<div class="t" style="left:92.3px;top:144.03px;width:9px;height:8.7px;line-height:8.7px;font-size:5.4px;color:#eceeef;font-weight:bold;text-align:center;">M</div>
<div class="t" style="left:103.2px;top:144.03px;width:9px;height:8.7px;line-height:8.7px;font-size:5.4px;color:#eceeef;font-weight:bold;text-align:center;">S</div>
<svg style="left:116.8px;top:144px" width="8" height="8" viewBox="0 0 8 8"><circle cx="4" cy="4" r="3.6" fill="#505355"/><circle cx="4" cy="4" r="1.5" fill="#aeb0b1"/></svg>
<svg style="left:92px;top:158px" width="99" height="7"><rect x="0.3" y="0.23" width="98.3" height="5.8" rx="1" fill="#2e3032"/></svg>
<div class="t" style="left:92.3px;top:158.92999999999998px;width:98.3px;height:5.8px;line-height:5.8px;font-size:4.6px;color:#dcdedf;font-weight:bold;text-align:center;">Don't record</div>
<svg style="left:92px;top:169px" width="99" height="7"><rect x="0.3" y="0.23" width="98.3" height="5.8" rx="1" fill="#2e3032"/></svg>
<div class="t" style="left:92.3px;top:169.93px;width:98.3px;height:5.8px;line-height:5.8px;font-size:4.6px;color:#dcdedf;font-weight:bold;text-align:center;">Built-in Output</div>
<svg style="left:82px;top:189px" width="5" height="61"><rect x="0" y="0.56" width="4.6" height="60.23" fill="#8ad07e"/></svg>
<svg style="left:82px;top:188px" width="114" height="2"><rect x="0" y="0.86" width="114" height="0.9" fill="#313335"/></svg>
<svg style="left:83px;top:190px" width="2" height="3"><rect x="0.3" y="0.46" width="1.6" height="1.6" fill="#2a2c2e"/></svg>
<svg style="left:91px;top:192px" width="8" height="7"><rect x="0" y="0.56" width="7.5" height="5.5" rx="0.8" fill="#8f9294"/></svg>
<svg style="left:92px;top:194px" width="6" height="4"><rect x="0" y="0.56" width="5.5" height="2.5" fill="#3c3f41"/></svg>
<div class="t" style="left:103.9px;top:190.85999999999999px;width:90px;height:8px;line-height:8px;font-size:5px;color:#f2f3f4;font-weight:bold;text-align:left;">6 - MIDI</div>
<svg style="left:92px;top:204px" width="10" height="10"><rect x="0.3" y="0.26" width="9" height="9" rx="1" fill="#505355"/></svg>
<svg style="left:103px;top:204px" width="10" height="10"><rect x="0.2" y="0.26" width="9" height="9" rx="1" fill="#505355"/></svg>
<div class="t" style="left:92.3px;top:205.06px;width:9px;height:8.7px;line-height:8.7px;font-size:5.4px;color:#eceeef;font-weight:bold;text-align:center;">M</div>
<div class="t" style="left:103.2px;top:205.06px;width:9px;height:8.7px;line-height:8.7px;font-size:5.4px;color:#eceeef;font-weight:bold;text-align:center;">S</div>
<svg style="left:116.8px;top:205.1px" width="8" height="8" viewBox="0 0 8 8"><circle cx="4" cy="4" r="3.6" fill="#505355"/><circle cx="4" cy="4" r="2.1" fill="#e0506a"/></svg>
<svg style="left:92px;top:219px" width="99" height="7"><rect x="0.3" y="0.26" width="98.3" height="5.8" rx="1" fill="#2e3032"/></svg>
<div class="t" style="left:92.3px;top:219.95999999999998px;width:98.3px;height:5.8px;line-height:5.8px;font-size:4.6px;color:#dcdedf;font-weight:bold;text-align:center;">All channels, all devices</div>
<svg style="left:92px;top:230px" width="99" height="7"><rect x="0.3" y="0.26" width="98.3" height="5.8" rx="1" fill="#2e3032"/></svg>
<div class="t" style="left:92.3px;top:230.95999999999998px;width:98.3px;height:5.8px;line-height:5.8px;font-size:4.6px;color:#dcdedf;font-weight:bold;text-align:center;">Piano (Instrument)</div>
<svg style="left:86px;top:250px" width="110" height="62"><rect x="0.5" y="0.3" width="109.5" height="61.03" fill="#5a5d5f"/></svg>
<svg style="left:82px;top:250px" width="5" height="61"><rect x="0" y="0.6" width="4.6" height="60.23" fill="#22b8d8"/></svg>
<svg style="left:82px;top:249px" width="114" height="2"><rect x="0" y="0.9" width="114" height="0.9" fill="#313335"/></svg>
<svg style="left:83px;top:251px" width="2" height="3"><rect x="0.3" y="0.5" width="1.6" height="1.6" fill="#2a2c2e"/></svg>
<svg style="left:90px;top:252.4px" width="10" height="8" viewBox="0 0 10 8"><g stroke="#8f9294" stroke-width="0.9"><path d="M1.2 3.5 V4.5 M2.9 2.6 V5.4 M4.6 0.6 V7.4 M6.3 2.6 V5.4 M8 3.5 V4.5"/></g></svg>
<div class="t" style="left:103.9px;top:251.9px;width:90px;height:8px;line-height:8px;font-size:5px;color:#f2f3f4;font-weight:bold;text-align:left;">Vocal main</div>
<svg style="left:92px;top:265px" width="10" height="10"><rect x="0.3" y="0.3" width="9" height="9" rx="1" fill="#484b4d"/></svg>
<svg style="left:103px;top:265px" width="10" height="10"><rect x="0.2" y="0.3" width="9" height="9" rx="1" fill="#484b4d"/></svg>
<div class="t" style="left:92.3px;top:266.1px;width:9px;height:8.7px;line-height:8.7px;font-size:5.4px;color:#eceeef;font-weight:bold;text-align:center;">M</div>
<div class="t" style="left:103.2px;top:266.1px;width:9px;height:8.7px;line-height:8.7px;font-size:5.4px;color:#eceeef;font-weight:bold;text-align:center;">S</div>
<svg style="left:116.8px;top:266.1px" width="8" height="8" viewBox="0 0 8 8"><circle cx="4" cy="4" r="3.6" fill="#484b4d"/><circle cx="4" cy="4" r="1.5" fill="#aeb0b1"/></svg>
<svg style="left:92px;top:280px" width="99" height="7"><rect x="0.3" y="0.3" width="98.3" height="5.8" rx="1" fill="#2e3032"/></svg>
<div class="t" style="left:92.3px;top:281px;width:98.3px;height:5.8px;line-height:5.8px;font-size:4.6px;color:#dcdedf;font-weight:bold;text-align:center;">Don't record</div>
<svg style="left:92px;top:291px" width="99" height="7"><rect x="0.3" y="0.3" width="98.3" height="5.8" rx="1" fill="#2e3032"/></svg>
<div class="t" style="left:92.3px;top:292px;width:98.3px;height:5.8px;line-height:5.8px;font-size:4.6px;color:#dcdedf;font-weight:bold;text-align:center;">Built-in Output</div>
<svg style="left:82px;top:311px" width="5" height="61"><rect x="0" y="0.6" width="4.6" height="60.23" fill="#8ad07e"/></svg>
<svg style="left:82px;top:310px" width="114" height="2"><rect x="0" y="0.9" width="114" height="0.9" fill="#313335"/></svg>
<svg style="left:83px;top:312px" width="2" height="3"><rect x="0.3" y="0.5" width="1.6" height="1.6" fill="#2a2c2e"/></svg>
<svg style="left:90px;top:313.4px" width="10" height="8" viewBox="0 0 10 8"><g stroke="#8f9294" stroke-width="0.9"><path d="M1.2 3.5 V4.5 M2.9 2.6 V5.4 M4.6 0.6 V7.4 M6.3 2.6 V5.4 M8 3.5 V4.5"/></g></svg>
<div class="t" style="left:103.9px;top:312.90000000000003px;width:90px;height:8px;line-height:8px;font-size:5px;color:#f2f3f4;font-weight:bold;text-align:left;">Vocal aux</div>
<svg style="left:92px;top:326px" width="10" height="10"><rect x="0.3" y="0.3" width="9" height="9" rx="1" fill="#505355"/></svg>
<svg style="left:103px;top:326px" width="10" height="10"><rect x="0.2" y="0.3" width="9" height="9" rx="1" fill="#505355"/></svg>
<div class="t" style="left:92.3px;top:327.1px;width:9px;height:8.7px;line-height:8.7px;font-size:5.4px;color:#eceeef;font-weight:bold;text-align:center;">M</div>
<div class="t" style="left:103.2px;top:327.1px;width:9px;height:8.7px;line-height:8.7px;font-size:5.4px;color:#eceeef;font-weight:bold;text-align:center;">S</div>
<svg style="left:116.8px;top:327.1px" width="8" height="8" viewBox="0 0 8 8"><circle cx="4" cy="4" r="3.6" fill="#505355"/><circle cx="4" cy="4" r="1.5" fill="#aeb0b1"/></svg>
<svg style="left:92px;top:341px" width="99" height="7"><rect x="0.3" y="0.3" width="98.3" height="5.8" rx="1" fill="#2e3032"/></svg>
<div class="t" style="left:92.3px;top:342px;width:98.3px;height:5.8px;line-height:5.8px;font-size:4.6px;color:#dcdedf;font-weight:bold;text-align:center;">Don't record</div>
<svg style="left:92px;top:352px" width="99" height="7"><rect x="0.3" y="0.3" width="98.3" height="5.8" rx="1" fill="#2e3032"/></svg>
<div class="t" style="left:92.3px;top:353px;width:98.3px;height:5.8px;line-height:5.8px;font-size:4.6px;color:#dcdedf;font-weight:bold;text-align:center;">Built-in Output</div>
<svg style="left:82px;top:372px" width="5" height="11"><rect x="0" y="0.7" width="4.6" height="9.8" fill="#22b8d8"/></svg>
<svg style="left:82px;top:372px" width="114" height="1"><rect x="0" y="0" width="114" height="0.9" fill="#313335"/></svg>
<svg style="left:83px;top:373px" width="2" height="3"><rect x="0.3" y="0.6" width="1.6" height="1.6" fill="#2a2c2e"/></svg>
<svg style="left:90px;top:374.5px" width="10" height="8" viewBox="0 0 10 8"><g stroke="#8f9294" stroke-width="0.9"><path d="M1.2 3.5 V4.5 M2.9 2.6 V5.4 M4.6 0.6 V7.4 M6.3 2.6 V5.4 M8 3.5 V4.5"/></g></svg>
<div class="t" style="left:103.9px;top:374px;width:90px;height:8px;line-height:8px;font-size:5px;color:#f2f3f4;font-weight:bold;text-align:left;">Harmonica</div>
<svg style="left:181px;top:204px" width="9" height="9"><rect x="0" y="0.5" width="8.5" height="8" rx="1" fill="#4a4d4f"/></svg>
<div style="left:182.8px;top:206.3px;width:5px;height:4.3px;background:transparent;border:0.7px solid #c4c6c7;border-top-width:1.4px;box-sizing:border-box"></div>
<svg style="left:196px;top:39px" width="5" height="344"><rect x="0.3" y="0" width="4.7" height="344" fill="#2f3234"/></svg>
<svg style="left:196px;top:202px" width="5" height="48"><rect x="0.3" y="0" width="4.3" height="47.5" fill="#8ee38a"/></svg>
<svg style="left:196px;top:278px" width="5" height="33"><rect x="0.3" y="0" width="4.3" height="32.5" fill="#8ee38a"/></svg>
<svg style="left:196px;top:340px" width="5" height="32"><rect x="0.3" y="0" width="4.3" height="31.5" fill="#8ee38a"/></svg>
<svg style="left:196px;top:189px" width="5" height="13"><rect x="0.3" y="0.7" width="4.3" height="12.3" fill="#3c3f41"/></svg>
<svg style="left:36px;top:383px" width="656" height="27"><rect x="0" y="0" width="656" height="27" fill="#3a3d3f"/></svg>
<svg style="left:36px;top:382px" width="656" height="2"><rect x="0" y="0.6" width="656" height="0.8" fill="#2c2e30"/></svg>
<svg style="left:41px;top:386px" width="25" height="20"><rect x="0.5" y="0.5" width="23.8" height="19" rx="1" fill="#4a4d4f"/></svg>
<svg style="left:66px;top:386px" width="25" height="20"><rect x="0" y="0.5" width="25" height="19" rx="1" fill="#5ec87c"/></svg>
<svg style="left:91px;top:386px" width="25" height="20"><rect x="0.8" y="0.5" width="23.8" height="19" rx="1" fill="#4a4d4f"/></svg>
<svg style="left:117px;top:386px" width="25" height="20"><rect x="0.3" y="0.5" width="23.8" height="19" rx="1" fill="#4a4d4f"/></svg>
<svg style="left:142px;top:386px" width="25" height="20"><rect x="0.3" y="0.5" width="23.8" height="19" rx="1" fill="#4a4d4f"/></svg>
<svg style="left:166px;top:386px" width="25" height="20"><rect x="0.8" y="0.5" width="23.8" height="19" rx="1" fill="#4a4d4f"/></svg>
<svg style="left:0;top:383px" width="728" height="27" viewBox="0 383 728 27">
<circle cx="53.4" cy="396" r="3.6" fill="#e6e8e9"/>
<path d="M74.5 391 L83.5 396 L74.5 401Z" fill="#151718"/>
<path d="M103.5 392.2 V399.8 L98 396Z M109.5 392.2 V399.8 L104 396Z" fill="#e6e8e9"/>
<rect x="125.3" y="392.2" width="7.6" height="7.6" fill="#e6e8e9"/>
<g stroke="#e6e8e9" stroke-width="1.5" fill="none"><path d="M149.5 395.5 a3 3 0 0 1 3 -2.8 h4"/><path d="M159.5 396.5 a3 3 0 0 1 -3 2.8 h-4"/></g>
<path d="M156 390.3 L159.2 392.7 L156 395.1Z M153 396.9 L149.8 399.3 L153 401.7Z" fill="#e6e8e9"/>
<circle cx="178.7" cy="392.7" r="2.7" fill="#e6e8e9"/>
</svg>
<div class="t" style="left:168px;top:398px;width:12px;height:7px;line-height:7px;font-size:4.8px;color:#a4a6a7;font-weight:bold;text-align:right;">12</div>
<div class="t" style="left:180.2px;top:397.3px;width:12px;height:8px;line-height:8px;font-size:6.3px;color:#eceeef;font-weight:bold;text-align:left;">34</div>
<svg style="left:250px;top:385px" width="80" height="26"><rect x="0.5" y="0.8" width="79.5" height="24.5" rx="1" fill="#2a2c2e"/></svg>
<div class="t" style="left:252.5px;top:388px;width:5px;height:4.5px;line-height:4.5px;font-size:2.8px;color:#8f9294;font-weight:bold;text-align:center;">T</div>
<div class="t" style="left:252.5px;top:392px;width:5px;height:4.5px;line-height:4.5px;font-size:2.8px;color:#8f9294;font-weight:bold;text-align:center;">I</div>
<div class="t" style="left:252.5px;top:396px;width:5px;height:4.5px;line-height:4.5px;font-size:2.8px;color:#8f9294;font-weight:bold;text-align:center;">M</div>
<div class="t" style="left:252.5px;top:400px;width:5px;height:4.5px;line-height:4.5px;font-size:2.8px;color:#8f9294;font-weight:bold;text-align:center;">E</div>
<div class="t" style="left:262px;top:389.5px;width:56px;height:14px;line-height:14px;font-size:10.7px;color:#dcdedf;font-weight:bold;font-family:'Liberation Mono',monospace;text-align:center;letter-spacing:0.1px">3:2:061</div>
<svg style="left:332px;top:385px" width="63" height="26"><rect x="0" y="0.8" width="62.5" height="24.5" rx="1" fill="#35383a"/></svg>
<div class="t" style="left:339.5px;top:388.3px;width:18px;height:7px;line-height:7px;font-size:5.4px;color:#eceeef;font-weight:bold;text-align:left;">Start</div>
<div class="t" style="left:339.5px;top:399px;width:18px;height:7px;line-height:7px;font-size:5.4px;color:#eceeef;font-weight:bold;text-align:left;">End</div>
<div class="t" style="left:368.5px;top:388.3px;width:24px;height:7px;line-height:7px;font-size:5.4px;color:#eceeef;font-weight:bold;text-align:left;">4:2.656</div>
<div class="t" style="left:368.5px;top:399px;width:24px;height:7px;line-height:7px;font-size:5.4px;color:#eceeef;font-weight:bold;text-align:left;">4:2.656</div>
<svg style="left:397px;top:385px" width="40" height="26"><rect x="0" y="0.8" width="40" height="24.5" rx="1" fill="#35383a"/></svg>
<div class="t" style="left:397px;top:391.5px;width:40px;height:11px;line-height:11px;font-size:7.8px;color:#f2f3f4;font-weight:bold;text-align:center;">Grid</div>
<svg style="left:439px;top:385px" width="39" height="26"><rect x="0" y="0.8" width="38.5" height="24.5" rx="1" fill="#35383a"/></svg>
<div class="t" style="left:444px;top:388px;width:18px;height:7px;line-height:7px;font-size:4.5px;color:#dcdedf;font-weight:bold;text-align:center;">Bpm</div>
<div class="t" style="left:444px;top:398.8px;width:18px;height:7px;line-height:7px;font-size:4.5px;color:#dcdedf;font-weight:bold;text-align:center;">85</div>
<div class="t" style="left:466px;top:388px;width:8px;height:7px;line-height:7px;font-size:4.5px;color:#dcdedf;font-weight:normal;text-align:center;">&#9652;</div>
<div class="t" style="left:466px;top:398.8px;width:8px;height:7px;line-height:7px;font-size:4.5px;color:#dcdedf;font-weight:normal;text-align:center;">&#9662;</div>
<svg style="left:479px;top:385px" width="25" height="26"><rect x="0.5" y="0.8" width="24.5" height="24.5" rx="1" fill="#35383a"/></svg>
<svg style="left:485px;top:390px" width="13" height="13" viewBox="0 0 13 13"><path d="M4.3 1.5 H7.7 L10.3 11 H1.7Z M2.5 8.3 H9.5 M4.3 8.3 L11 2.5" stroke="#e6e8e9" stroke-width="1" fill="none"/></svg>
<svg style="left:506px;top:385px" width="19" height="26"><rect x="0" y="0.8" width="19" height="24.5" rx="1" fill="#35383a"/></svg>
<div class="t" style="left:506px;top:388px;width:19px;height:7px;line-height:7px;font-size:4.5px;color:#dcdedf;font-weight:bold;text-align:center;">4</div>
<div class="t" style="left:506px;top:398.8px;width:19px;height:7px;line-height:7px;font-size:4.5px;color:#dcdedf;font-weight:bold;text-align:center;">4</div>
<svg style="left:527px;top:385px" width="28" height="26"><rect x="0" y="0.8" width="27.5" height="24.5" rx="1" fill="#35383a"/></svg>
<svg style="left:535px;top:390px" width="14" height="13" viewBox="0 0 14 13"><path d="M5.3 9.5 V1.5" stroke="#e6e8e9" stroke-width="1"/><ellipse cx="3.8" cy="9.8" rx="1.9" ry="1.5" fill="#e6e8e9"/><circle cx="9.7" cy="6.3" r="1.9" fill="none" stroke="#e6e8e9" stroke-width="0.8"/><path d="M9.7 5.3 V6.3" stroke="#e6e8e9" stroke-width="0.6"/></svg>
<div style="left:380px;top:55px;width:273px;height:262px;background:#2a2c2e;border-radius:2px 2px 1px 1px;box-shadow:0 2px 6px rgba(0,0,0,0.55)"></div>
<div style="left:380px;top:55px;width:273px;height:10.3px;background:linear-gradient(#f4f4f4,#dcdcdc);border-radius:2px 2px 0 0"></div>
<svg style="left:383.6px;top:57px" width="6" height="6" viewBox="0 0 6 6"><circle cx="3" cy="3" r="2.5" fill="#e9e9e9" stroke="#b4b4b4" stroke-width="0.6"/></svg>
<svg style="left:392.5px;top:57px" width="6" height="6" viewBox="0 0 6 6"><circle cx="3" cy="3" r="2.5" fill="#e9e9e9" stroke="#b4b4b4" stroke-width="0.6"/></svg>
<svg style="left:401.4px;top:57px" width="6" height="6" viewBox="0 0 6 6"><circle cx="3" cy="3" r="2.5" fill="#e9e9e9" stroke="#b4b4b4" stroke-width="0.6"/></svg>
<div class="t" style="left:380px;top:55.5px;width:273px;height:10px;line-height:10px;font-size:6.3px;color:#6a6a6a;font-weight:normal;text-align:center;letter-spacing:0.05px">VocalTune &#8211; Track 7 Effect 1</div>
<svg style="left:380px;top:65px" width="273" height="7"><rect x="0" y="0.3" width="273" height="6.2" fill="#2a2c2e"/></svg>
<svg style="left:380px;top:71px" width="273" height="32"><rect x="0" y="0.5" width="273" height="31.5" fill="#3d4042"/></svg>
<div class="t" style="left:398.7px;top:65.5px;width:20px;height:6px;line-height:6px;font-size:3.8px;color:#eceeef;font-weight:bold;text-align:center;">0 dB</div>
<div class="t" style="left:428.5px;top:65.5px;width:20px;height:6px;line-height:6px;font-size:3.8px;color:#eceeef;font-weight:bold;text-align:center;">0 dB</div>
<div class="t" style="left:595.5px;top:65.5px;width:30px;height:6px;line-height:6px;font-size:3.8px;color:#eceeef;font-weight:bold;text-align:center;">CPU: 1.1%</div>
<div class="t" style="left:626.5px;top:65.5px;width:24px;height:6px;line-height:6px;font-size:3.8px;color:#eceeef;font-weight:bold;text-align:center;">32 bit</div>
<svg style="left:383px;top:80.6px" width="10" height="10" viewBox="0 0 10 10"><path d="M5 0.8 V4.8 M2.8 2.3 A3.4 3.4 0 1 0 7.2 2.3" stroke="#4fcf78" stroke-width="1.25" fill="none" stroke-linecap="round"/></svg>
<svg style="left:401.2px;top:77.7px" width="15" height="15" viewBox="0 0 15 15"><circle cx="7.5" cy="7.5" r="7.4" fill="#303234"/><circle cx="7.5" cy="7.5" r="6.6" fill="#787b7c"/><circle cx="7.5" cy="2.6" r="0.7" fill="#a8eab2"/></svg>
<div class="t" style="left:398.7px;top:96px;width:20px;height:6px;line-height:6px;font-size:3.8px;color:#eceeef;font-weight:bold;text-align:center;">Pre</div>
<svg style="left:431px;top:77.7px" width="15" height="15" viewBox="0 0 15 15"><circle cx="7.5" cy="7.5" r="7.4" fill="#303234"/><circle cx="7.5" cy="7.5" r="6.6" fill="#787b7c"/><circle cx="7.5" cy="2.6" r="0.7" fill="#a8eab2"/></svg>
<div class="t" style="left:428.5px;top:96px;width:20px;height:6px;line-height:6px;font-size:3.8px;color:#eceeef;font-weight:bold;text-align:center;">Post</div>
<svg style="left:494px;top:77px" width="153" height="16"><rect x="0.3" y="0.9" width="152" height="14.3" rx="1" fill="#1e2022"/></svg>
<div class="t" style="left:497.5px;top:80px;width:60px;height:10px;line-height:10px;font-size:5.5px;color:#f4f5f6;font-weight:bold;text-align:left;">Medium attack</div>
<svg style="left:609.5px;top:81.2px" width="36" height="8" viewBox="0 0 36 8">
<path d="M1.5 1.2 h4 l1 1 v4.6 h-5z M2.7 1.2 v2 h2.3 v-2" stroke="#a4a6a7" stroke-width="0.7" fill="none"/>
<path d="M13.8 2.5 h4.4 M14.5 2.5 v4.3 h3 v-4.3 M15.3 1.4 h1.4" stroke="#a4a6a7" stroke-width="0.7" fill="none"/>
<circle cx="29.5" cy="4" r="1.5" fill="none" stroke="#e4e6e7" stroke-width="1.3"/>
</svg>
<div style="left:380px;top:309.5px;width:273px;height:7.5px;background:#393c3e;border-radius:0 0 1px 1px"></div>
<div class="t" style="left:434px;top:118.5px;width:70px;height:9px;line-height:9px;font-size:6.3px;color:#9c9e9f;font-weight:normal;text-align:center;">Correction speed</div>
<div class="t" style="left:530px;top:118.5px;width:70px;height:9px;line-height:9px;font-size:6.3px;color:#9c9e9f;font-weight:normal;text-align:center;">Correction amount</div>
<div class="t" style="left:388.5px;top:121.3px;width:24px;height:6px;line-height:6px;font-size:3px;color:#8a8d8f;font-weight:normal;text-align:center;">Input level</div>
<div class="t" style="left:617px;top:121.3px;width:32px;height:6px;line-height:6px;font-size:3px;color:#8a8d8f;font-weight:normal;text-align:center;">Correction level</div>
<svg style="left:436px;top:129px" width="66" height="66" viewBox="-33 -33 66 66"><circle r="31.5" fill="#454849"/><path d="M0 0 L15.75 -27.28" stroke="#2f3133" stroke-width="0.9"/><path d="M0 0 L-15.75 -27.28" stroke="#2f3133" stroke-width="0.9"/><path d="M0 0 L31.5 0" stroke="#2f3133" stroke-width="0.9"/><path d="M0 0 L-31.5 0" stroke="#2f3133" stroke-width="0.9"/><path d="M0 0 L15.75 27.28" stroke="#2f3133" stroke-width="0.9"/><path d="M0 0 L-15.75 27.28" stroke="#2f3133" stroke-width="0.9"/><path d="M0 0 L15.75 27.28 A31.5 31.5 0 0 1 -15.75 27.28Z" fill="#3c3f40"/><circle r="15" fill="#2c2e30"/><circle r="11.8" fill="#757879"/><circle cx="-8.05" cy="-2.01" r="1.4" fill="#8cf09a"/></svg>
<div class="t" style="left:459px;top:135.5px;width:20px;height:6px;line-height:6px;font-size:3px;color:#8f9293;font-weight:normal;text-align:center;">Medium</div>
<div class="t" style="left:438px;top:148px;width:20px;height:6px;line-height:6px;font-size:3px;color:#8f9293;font-weight:normal;text-align:center;">Slow</div>
<div class="t" style="left:480px;top:148px;width:20px;height:6px;line-height:6px;font-size:3px;color:#8f9293;font-weight:normal;text-align:center;">High</div>
<div class="t" style="left:438px;top:170px;width:20px;height:6px;line-height:6px;font-size:3px;color:#8f9293;font-weight:normal;text-align:center;">Soft</div>
<div class="t" style="left:480px;top:170px;width:20px;height:6px;line-height:6px;font-size:3px;color:#8f9293;font-weight:normal;text-align:center;">Absolute</div>
<svg style="left:531.8px;top:129.3px" width="66" height="66" viewBox="-33 -33 66 66"><circle r="31.5" fill="#454849"/><path d="M0 0 L15.75 -27.28" stroke="#2f3133" stroke-width="0.9"/><path d="M0 0 L-15.75 -27.28" stroke="#2f3133" stroke-width="0.9"/><path d="M0 0 L31.5 0" stroke="#2f3133" stroke-width="0.9"/><path d="M0 0 L-31.5 0" stroke="#2f3133" stroke-width="0.9"/><path d="M0 0 L15.75 27.28" stroke="#2f3133" stroke-width="0.9"/><path d="M0 0 L-15.75 27.28" stroke="#2f3133" stroke-width="0.9"/><path d="M0 0 L15.75 27.28 A31.5 31.5 0 0 1 -15.75 27.28Z" fill="#3c3f40"/><circle r="15" fill="#2c2e30"/><circle r="11.8" fill="#757879"/><circle cx="5.22" cy="-6.45" r="1.4" fill="#8cf09a"/></svg>
<div class="t" style="left:554.8px;top:135.8px;width:20px;height:6px;line-height:6px;font-size:3px;color:#8f9293;font-weight:normal;text-align:center;">Medium</div>
<div class="t" style="left:533.8px;top:148.3px;width:20px;height:6px;line-height:6px;font-size:3px;color:#8f9293;font-weight:normal;text-align:center;">Mild</div>
<div class="t" style="left:575.8px;top:148.3px;width:20px;height:6px;line-height:6px;font-size:3px;color:#8f9293;font-weight:normal;text-align:center;">High</div>
<div class="t" style="left:533.8px;top:170.3px;width:20px;height:6px;line-height:6px;font-size:3px;color:#8f9293;font-weight:normal;text-align:center;">Soft</div>
<div class="t" style="left:575.8px;top:170.3px;width:20px;height:6px;line-height:6px;font-size:3px;color:#8f9293;font-weight:normal;text-align:center;">Hard</div>
<svg style="left:401px;top:131px" width="7" height="145"><rect x="0.2" y="0" width="6.3" height="144.5" fill="#1c1e1f"/></svg>
<svg style="left:401px;top:197px" width="7" height="79"><rect x="0.2" y="0" width="6.3" height="78.5" fill="#7fe58a"/></svg>
<div class="t" style="left:389px;top:129.5px;width:10px;height:5px;line-height:5px;font-size:2.8px;color:#808385;font-weight:normal;text-align:right;">0</div>
<div class="t" style="left:389px;top:136.5px;width:10px;height:5px;line-height:5px;font-size:2.8px;color:#808385;font-weight:normal;text-align:right;">-3</div>
<div class="t" style="left:389px;top:144.5px;width:10px;height:5px;line-height:5px;font-size:2.8px;color:#808385;font-weight:normal;text-align:right;">-6</div>
<div class="t" style="left:389px;top:158.5px;width:10px;height:5px;line-height:5px;font-size:2.8px;color:#808385;font-weight:normal;text-align:right;">-12</div>
<div class="t" style="left:389px;top:178px;width:10px;height:5px;line-height:5px;font-size:2.8px;color:#808385;font-weight:normal;text-align:right;">-24</div>
<div class="t" style="left:389px;top:197.5px;width:10px;height:5px;line-height:5px;font-size:2.8px;color:#808385;font-weight:normal;text-align:right;">-36</div>
<div class="t" style="left:389px;top:216.5px;width:10px;height:5px;line-height:5px;font-size:2.8px;color:#808385;font-weight:normal;text-align:right;">-48</div>
<div class="t" style="left:389px;top:235.5px;width:10px;height:5px;line-height:5px;font-size:2.8px;color:#808385;font-weight:normal;text-align:right;">-60</div>
<div class="t" style="left:389px;top:255.5px;width:10px;height:5px;line-height:5px;font-size:2.8px;color:#808385;font-weight:normal;text-align:right;">-72</div>
<div class="t" style="left:389px;top:272.5px;width:10px;height:5px;line-height:5px;font-size:2.8px;color:#808385;font-weight:normal;text-align:right;">-80</div>
<svg style="left:629px;top:131px" width="7" height="145"><rect x="0.5" y="0" width="6" height="145" fill="#1c1e1f"/></svg>
<div class="t" style="left:637.5px;top:129.5px;width:14px;height:5px;line-height:5px;font-size:2.8px;color:#808385;font-weight:normal;text-align:left;">+100ct</div>
<div class="t" style="left:637.5px;top:165px;width:14px;height:5px;line-height:5px;font-size:2.8px;color:#808385;font-weight:normal;text-align:left;">+50</div>
<div class="t" style="left:637.5px;top:202.5px;width:14px;height:5px;line-height:5px;font-size:2.8px;color:#808385;font-weight:normal;text-align:left;">0</div>
<div class="t" style="left:637.5px;top:238.5px;width:14px;height:5px;line-height:5px;font-size:2.8px;color:#808385;font-weight:normal;text-align:left;">-50ct</div>
<div class="t" style="left:637.5px;top:272px;width:14px;height:5px;line-height:5px;font-size:2.8px;color:#808385;font-weight:normal;text-align:left;">-100ct</div>
<div class="t" style="left:410px;top:188.8px;width:40px;height:8px;line-height:8px;font-size:5px;color:#a0a2a3;font-weight:normal;text-align:center;">Stickiness</div>
<svg style="left:416px;top:197.5px" width="28" height="28" viewBox="-14 -14 28 28"><circle r="13.4" fill="#434647"/><circle r="9.3" fill="#282a2c"/><circle r="7.4" fill="#777a7b"/><circle cx="-4.09" cy="-3.68" r="0.9" fill="#b4f0bc"/></svg>
<div class="t" style="left:410px;top:225.8px;width:40px;height:6px;line-height:6px;font-size:3.2px;color:#a4a6a7;font-weight:normal;text-align:center;">50%</div>
<div class="t" style="left:582.9px;top:188.8px;width:40px;height:8px;line-height:8px;font-size:5px;color:#a0a2a3;font-weight:normal;text-align:center;">Tuning</div>
<svg style="left:588.9px;top:197.5px" width="28" height="28" viewBox="-14 -14 28 28"><circle r="13.4" fill="#434647"/><circle r="9.3" fill="#282a2c"/><circle r="7.4" fill="#777a7b"/><circle cx="4.02" cy="-3.75" r="0.9" fill="#b4f0bc"/></svg>
<div class="t" style="left:582.9px;top:225.8px;width:40px;height:6px;line-height:6px;font-size:3.2px;color:#a4a6a7;font-weight:normal;text-align:center;">440.0 Hz</div>
<div style="left:484.6px;top:205.7px;width:26.6px;height:11px;background:#2a2c2e;border:0.8px solid #55585a;box-sizing:border-box;border-radius:1px"></div>
<svg style="left:488.1px;top:209.2px" width="8" height="5" viewBox="0 0 8 5"><path d="M0 0 H7.5 L3.75 4.3Z" fill="#b4b6b7"/></svg>
<div class="t" style="left:484.6px;top:207px;width:22.6px;height:10px;line-height:10px;font-size:4.8px;color:#b4b6b7;font-weight:normal;text-align:right;">D</div>
<div style="left:521.4px;top:205.7px;width:54px;height:11px;background:#2a2c2e;border:0.8px solid #55585a;box-sizing:border-box;border-radius:1px"></div>
<svg style="left:524.9px;top:209.2px" width="8" height="5" viewBox="0 0 8 5"><path d="M0 0 H7.5 L3.75 4.3Z" fill="#b4b6b7"/></svg>
<div class="t" style="left:521.4px;top:207px;width:50px;height:10px;line-height:10px;font-size:4.8px;color:#b4b6b7;font-weight:normal;text-align:right;">Major</div>
<div style="left:421px;top:240px;width:26.55px;height:44px;background:#7c7e7f;border-radius:0 0 1.5px 1.5px"></div>
<div style="left:448.4px;top:240px;width:26.55px;height:44px;background:#f6f6f6;border-radius:0 0 1.5px 1.5px"></div>
<div style="left:475.7px;top:240px;width:26.55px;height:44px;background:#f6f6f6;border-radius:0 0 1.5px 1.5px"></div>
<div style="left:503.1px;top:240px;width:26.55px;height:44px;background:#7c7e7f;border-radius:0 0 1.5px 1.5px"></div>
<div style="left:530.4px;top:240px;width:26.55px;height:44px;background:#f6f6f6;border-radius:0 0 1.5px 1.5px"></div>
<div style="left:557.8px;top:240px;width:26.55px;height:44px;background:#f6f6f6;border-radius:0 0 1.5px 1.5px"></div>
<div style="left:585.1px;top:240px;width:26.55px;height:44px;background:#f6f6f6;border-radius:0 0 1.5px 1.5px"></div>
<div style="left:439.3px;top:240px;width:17.3px;height:25.3px;background:#1e2021;border-radius:0 0 1px 1px"></div>
<div style="left:467px;top:240px;width:17.3px;height:25.3px;background:#767879;border-radius:0 0 1px 1px"></div>
<div style="left:521.6px;top:240px;width:17.3px;height:25.3px;background:#1e2021;border-radius:0 0 1px 1px"></div>
<div style="left:548.8px;top:240px;width:17.3px;height:25.3px;background:#767879;border-radius:0 0 1px 1px"></div>
<div style="left:576.2px;top:240px;width:17.3px;height:25.3px;background:#767879;border-radius:0 0 1px 1px"></div>
<svg style="left:444.7px;top:230.3px" width="7" height="7" viewBox="0 0 7 7"><circle cx="3.5" cy="3.5" r="2.6" fill="#8cf09a"/></svg>
<svg style="left:472.1px;top:230.3px" width="7" height="7" viewBox="0 0 7 7"><circle cx="3.5" cy="3.5" r="2.3" fill="none" stroke="#8f9293" stroke-width="0.7"/></svg>
<svg style="left:526.9px;top:230.3px" width="7" height="7" viewBox="0 0 7 7"><circle cx="3.5" cy="3.5" r="2.6" fill="#8cf09a"/></svg>
<svg style="left:554px;top:230.3px" width="7" height="7" viewBox="0 0 7 7"><circle cx="3.5" cy="3.5" r="2.3" fill="none" stroke="#8f9293" stroke-width="0.7"/></svg>
<svg style="left:581.8px;top:230.3px" width="7" height="7" viewBox="0 0 7 7"><circle cx="3.5" cy="3.5" r="2.3" fill="none" stroke="#8f9293" stroke-width="0.7"/></svg>
<svg style="left:431px;top:288.5px" width="7" height="7" viewBox="0 0 7 7"><circle cx="3.5" cy="3.5" r="2.3" fill="none" stroke="#8f9293" stroke-width="0.7"/></svg>
<svg style="left:458.5px;top:288.5px" width="7" height="7" viewBox="0 0 7 7"><circle cx="3.5" cy="3.5" r="2.6" fill="#8cf09a"/></svg>
<svg style="left:485.8px;top:288.5px" width="7" height="7" viewBox="0 0 7 7"><circle cx="3.5" cy="3.5" r="2.6" fill="#8cf09a"/></svg>
<svg style="left:513.2px;top:288.5px" width="7" height="7" viewBox="0 0 7 7"><circle cx="3.5" cy="3.5" r="2.3" fill="none" stroke="#8f9293" stroke-width="0.7"/></svg>
<svg style="left:540.5px;top:288.5px" width="7" height="7" viewBox="0 0 7 7"><circle cx="3.5" cy="3.5" r="2.6" fill="#8cf09a"/></svg>
<svg style="left:568.1px;top:288.5px" width="7" height="7" viewBox="0 0 7 7"><circle cx="3.5" cy="3.5" r="2.6" fill="#8cf09a"/></svg>
<svg style="left:595.1px;top:288.5px" width="7" height="7" viewBox="0 0 7 7"><circle cx="3.5" cy="3.5" r="2.6" fill="#8cf09a"/></svg>
<div class="t" style="left:450px;top:299.5px;width:147px;height:6px;line-height:6px;font-size:5.3px;color:#c8963c;font-weight:normal;text-align:center;">Collapsing stereo to mono output</div>
</div></body></html>
